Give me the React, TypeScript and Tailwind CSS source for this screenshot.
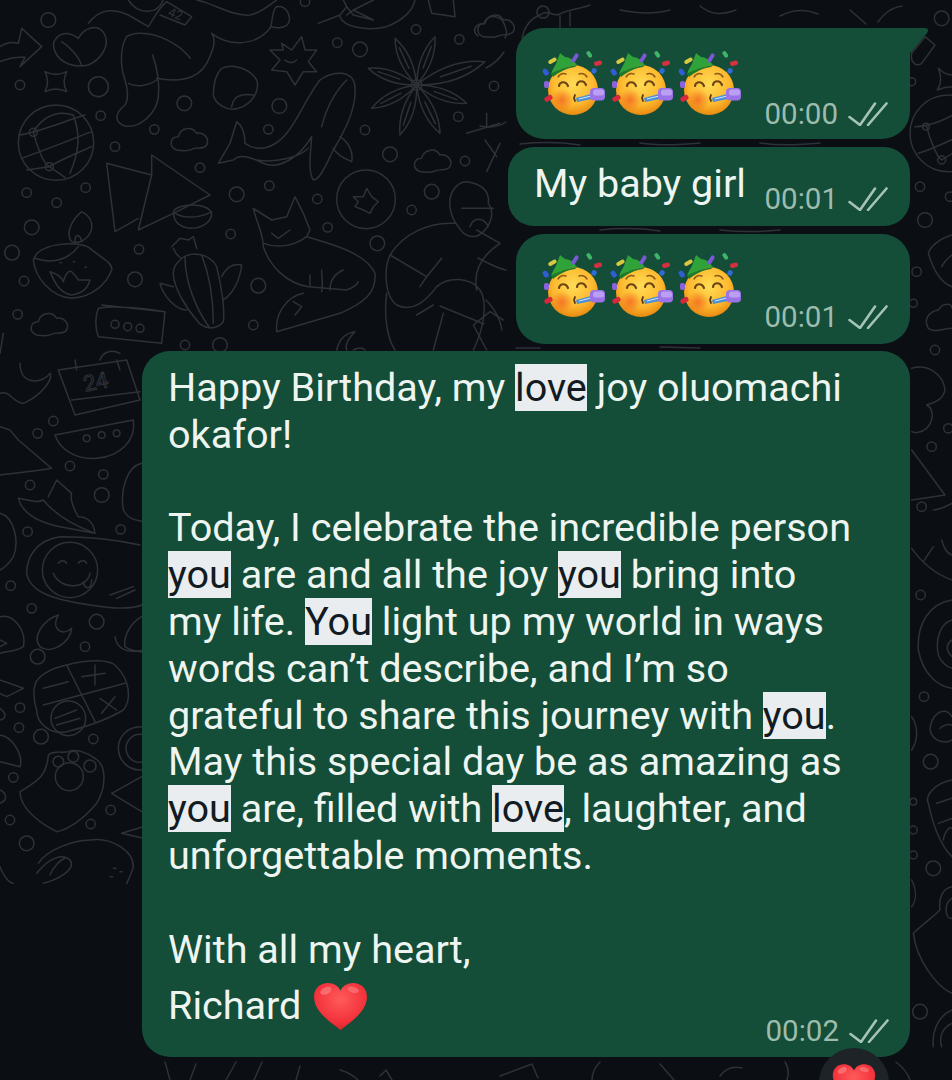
import React from "react";

const Dots = ({ c }: { c: number[][] }) => (
  <>
    {c.map(([x, y, r], i) => (
      <circle key={i} cx={x} cy={y} r={r} />
    ))}
  </>
);

const flowerTips = [
  [1185, 115], [1305, 110], [1455, 185], [1400, 310], [1320, 400], [1200, 405], [1115, 325], [1105, 205],
];

function leaf(cx: number, cy: number, tx: number, ty: number) {
  const dx = tx - cx;
  const dy = ty - cy;
  const mx = cx + dx * 0.55;
  const my = cy + dy * 0.55;
  const nx = -dy * 0.2;
  const ny = dx * 0.2;
  const vx = cx + dx * 0.35;
  const vy = cy + dy * 0.35;
  const wx = cx + dx * 0.8;
  const wy = cy + dy * 0.8;
  return `M${cx} ${cy}Q${mx + nx} ${my + ny} ${tx} ${ty}Q${mx - nx} ${my - ny} ${cx} ${cy}M${vx} ${vy}L${wx} ${wy}`;
}

const zoomTop = [
  [145, 60, 22], [60, 255, 14], [295, 260, 30], [302, 347, 14], [345, 440, 14], [463, 388, 14], [553, 310, 22], [838, 318, 22],
  [805, 388, 14], [1012, 128, 14], [1080, 148, 22], [1248, 88, 14], [1378, 118, 14], [1482, 258, 14], [1375, 350, 14], [1095, 390, 14],
  [1170, 463, 22], [1395, 483, 14], [1295, 575, 22], [1235, 630, 14], [600, 503, 14], [808, 557, 14], [710, 583, 22], [952, 597, 14],
  [983, 682, 14], [1132, 730, 22], [692, 702, 14], [775, 857, 22], [760, 975, 14], [80, 578, 14], [170, 608, 14], [257, 563, 14],
  [95, 682, 22], [36, 758, 22], [72, 843, 14], [53, 943, 14], [417, 748, 14], [405, 838, 22], [555, 1035, 14], [660, 1035, 22],
  [915, 5, 14], [345, 973, 12], [383, 980, 12], [420, 985, 12],
];

const zoomLeft = [
  [160, 183, 14], [113, 220, 14], [210, 318, 14], [310, 343, 14], [305, 405, 22], [90, 375, 14], [83, 515, 14], [362, 508, 14],
  [32, 677, 14], [95, 745, 14], [290, 785, 22], [255, 860, 14], [113, 890, 22], [60, 1043, 14], [57, 1103, 14], [123, 1130, 22],
  [280, 1137, 14], [40, 1252, 14], [332, 1350, 14], [30, 1380, 14], [272, 1392, 14], [80, 1450, 22], [260, 235, 10], [305, 225, 10], [350, 220, 10],
];

function Doodles() {
  return (
    <svg
      viewBox="0 0 952 1080"
      className="absolute inset-0 w-[952px] h-[1080px]"
      fill="none"
      stroke="#2e3237"
      strokeWidth="1.5"
      strokeLinecap="round"
      strokeLinejoin="round"
    >
      {/* upper-left field, coordinates at 3x */}
      <g transform="scale(0.33333)" strokeWidth="4.5">
        <Dots c={zoomTop} />
        <path d="M0 185C25 175 45 170 75 172L60 200L125 140L65 85L55 130C35 125 15 130 0 140" />
        <path d="M165 120C185 90 215 100 235 115C250 85 295 65 315 105C330 140 300 180 265 195C225 205 180 190 165 155C158 140 160 125 165 120ZM185 125C215 145 235 170 245 195" />
        <path d="M265 70C300 25 340 25 385 45L445 80M385 0C410 40 470 50 490 0M445 80C470 40 480 20 500 5L575 50L555 75L480 45" />
        <path d="M380 110C410 90 470 100 520 130C545 145 565 165 570 175M380 110C360 140 360 200 375 240C385 270 385 300 375 315C345 340 340 365 375 378C420 385 470 340 475 290C480 240 470 200 458 165M385 250C410 262 445 258 470 240" />
        <path d="M470 235C520 245 590 245 620 190C640 150 650 120 635 100C680 135 760 145 810 85C820 60 815 30 830 20C860 15 875 50 865 70C855 85 830 85 815 80M590 0C640 10 700 50 750 45C780 40 810 15 830 0" />
        <path d="M665 205C700 190 750 205 770 240C780 270 760 310 715 325C680 335 645 310 640 285C640 250 650 220 665 205ZM695 320C700 290 720 280 760 285" />
        <path d="M845 130L875 150L905 110L915 150L950 150L925 185L950 215L910 215L885 255L860 215L815 210L840 180L810 150L850 150ZM855 180C865 190 880 190 890 180" />
        <path d="M135 215C155 225 180 225 200 215C190 235 190 255 200 275C180 265 155 265 135 275C145 255 145 235 135 215Z" />
        <circle cx="168" cy="428" r="113" />
        <path d="M65 475C120 455 200 425 275 395M58 405C120 395 190 365 255 345M100 395C130 350 170 330 220 345M100 395C110 440 130 490 148 500M220 345C240 400 240 450 210 520M148 500C180 480 230 460 275 440M80 510L148 500L195 532" />
        <circle cx="100" cy="397" r="12" />
        <circle cx="148" cy="500" r="12" />
        <path d="M530 450C505 440 510 410 535 410C540 385 575 375 590 400C610 395 630 415 620 435C610 450 590 440 575 448C560 455 545 452 530 450Z" />
        <path transform="translate(730 65)" d="M530 450C505 440 510 410 535 410C540 385 575 375 590 400C610 395 630 415 620 435C610 450 590 440 575 448C560 455 545 452 530 450Z" />
        <path transform="translate(-420 555)" d="M530 450C505 440 510 410 535 410C540 385 575 375 590 400C610 395 630 415 620 435C610 450 590 440 575 448C560 455 545 452 530 450Z" />
        <path transform="translate(920 -340)" d="M530 450C505 440 510 410 535 410C540 385 575 375 590 400C610 395 630 415 620 435C610 450 590 440 575 448C560 455 545 452 530 450Z" />
        <path d="M320 490L455 525L455 465L630 585L520 640L415 690L455 525M320 490L345 695L415 655" />
        <path d="M520 635C530 610 625 605 635 640C635 670 600 685 570 685C535 680 520 660 520 635ZM525 640C560 660 610 650 635 635" />
        <path d="M105 770C120 730 240 720 270 745C300 770 340 790 335 810C320 850 280 890 215 895C150 890 105 830 100 780ZM105 775C150 790 200 785 235 740M180 788h4M220 785h4M255 802h4" />
        <path d="M245 635C215 660 195 700 215 725C240 735 280 710 275 670C270 650 255 640 245 635ZM225 725C225 700 240 700 245 725" />
        <path d="M150 815C175 825 185 830 190 845C195 825 205 810 215 815C225 825 230 830 235 840L270 840C265 860 250 880 215 885C180 880 165 850 150 815Z" />
        <path d="M540 780C570 750 630 760 650 800C665 860 675 930 670 965C650 990 610 990 590 960C555 920 520 860 520 820C520 800 530 790 540 780ZM555 770C555 850 590 930 630 985M605 765C630 830 640 900 640 970M515 740L540 715L565 720L580 710L590 745M520 745C530 770 540 770 545 775M520 860L480 850C490 890 530 930 560 930M665 830C680 800 700 790 725 795C720 840 700 880 670 900" />
        <path d="M760 625L815 660L860 650L885 590L910 640L930 690L920 710C990 730 1100 760 1125 820C1130 880 1090 910 1020 940L830 995C825 940 860 890 910 880M760 625C770 670 790 700 790 740C810 800 860 850 925 860L1040 870C1055 865 1070 855 1075 845M930 825V860M965 810C965 830 970 860 965 875M1030 810C995 825 990 850 990 870M790 730C830 745 880 740 920 710M815 700L835 715L870 690M880 905L905 920L885 945" />
        <path d="M655 490L690 430L710 365C730 380 735 410 735 430C770 455 820 450 860 400C900 350 920 290 960 240C1000 210 1060 210 1065 260C1070 330 1030 400 1000 450C980 490 960 540 940 540C925 520 930 470 935 410C900 470 840 510 790 490C750 470 720 460 700 480L655 490ZM1020 410C1050 430 1060 460 1055 485C1020 470 1005 455 1000 445M1040 240C1010 270 980 320 965 380M770 480C830 490 900 470 925 445" />
        {flowerTips.map(([x, y], i) => (
          <path key={i} d={leaf(1250, 255, x, y)} />
        ))}
        <circle cx="1250" cy="255" r="16" />
        <circle cx="1098" cy="598" r="88" />
        <path d="M1060 590L1090 590L1100 565L1115 590L1135 605L1120 620L1110 640L1090 630L1065 620L1075 605Z" />
        <path d="M1400 545C1440 550 1470 570 1465 610C1480 630 1480 660 1455 690C1430 720 1395 715 1375 680C1350 650 1340 600 1360 570C1370 555 1385 545 1400 545ZM1385 625L1480 625M1410 680C1420 650 1450 650 1465 680" />
        <path d="M1365 670C1290 665 1210 700 1170 765C1150 810 1155 890 1190 915C1240 940 1280 900 1310 860C1345 830 1410 830 1440 870C1465 910 1450 990 1420 1050M1170 765L1280 830L1325 775M1280 830L1260 860M1160 880C1150 960 1165 1020 1185 1050M1330 940L1300 1050M1250 945L1300 915M1430 690L1500 730M1500 730C1440 770 1420 820 1430 870M1420 975L1470 935L1510 960M1420 975L1460 1050" />
        <path d="M295 925C340 915 440 925 495 935L485 1030L295 1010C285 985 285 950 295 925ZM305 915L495 935" />
        <path d="M955 70L1020 45L1040 20L1060 45L1120 60L1060 30L1040 45M1020 50C1030 80 1100 95 1160 80C1210 60 1240 30 1245 0M1060 30L1120 0M1030 0L1040 20M1285 0L1295 40L1365 50L1360 0" />
        <path d="M1400 400L1500 370M1460 340V380M1455 420L1490 470M1500 430L1460 515" />
        <path d="M1010 1050C1020 1010 1040 1000 1065 995C1040 1020 1035 1035 1040 1050M1060 1050C1080 1040 1090 1045 1095 1050M0 1060L10 1000M300 1080C310 1050 340 1050 360 1060" />
        <text x="525" y="55" transform="rotate(22 525 45)" textAnchor="middle" fontSize="38" fontFamily="Roboto" stroke="none" fill="#2f3338">42</text>
      </g>

      {/* left column from y=360 */}
      <g transform="translate(0 360) scale(0.33333)" strokeWidth="4.5">
        <Dots c={zoomLeft} />
        <path d="M175 30L380 0L420 120L225 165ZM215 120L420 95M225 0L230 30M350 0L360 30" />
        <text x="288" y="88" transform="rotate(-12 288 70)" textAnchor="middle" fontSize="66" fontFamily="Roboto" strokeWidth="3">24</text>
        <path d="M165 225C240 210 320 195 400 180C410 240 360 290 290 295C230 300 180 270 165 225Z" />
        <path d="M0 100C30 90 40 130 70 130C120 110 160 60 150 40C130 70 60 80 60 10M0 200L30 210L55 240L155 325C100 335 40 340 0 345" />
        <path d="M55 415C90 420 110 430 130 420C170 470 230 500 285 520C280 480 255 470 235 470C205 420 215 400 215 400L170 360L145 410M55 415C70 470 130 490 180 500L285 520" />
        <path d="M420 555C330 535 250 530 180 530C110 540 80 590 80 640C90 700 170 720 270 735C330 745 390 750 425 735" />
        <circle cx="210" cy="630" r="83" />
        <path d="M160 640C180 690 260 690 270 640M175 610C180 600 195 600 200 610M235 610C240 600 255 600 260 610M250 665C252 690 275 690 275 660M330 705L400 680M350 715L405 690" />
        <path d="M0 460C40 470 60 540 40 590C25 615 10 625 0 630" />
        <path d="M175 765C130 780 95 830 120 860C150 885 210 850 215 805C190 830 150 810 175 765Z" />
        <path d="M0 770C40 760 80 810 70 860C40 880 20 870 0 880M0 840L20 850L0 860" />
        <path d="M105 975C110 950 150 925 200 915C260 900 330 895 350 920C390 960 395 1020 370 1050C320 1080 260 1100 200 1115C150 1125 110 1090 110 1050C100 1020 100 990 105 975ZM130 1035L375 970M200 915L285 1085M130 985L205 965M245 950L315 940M285 915L285 975M300 1015L350 1050M345 1010L305 1060" />
        <circle cx="205" cy="1075" r="52" />
        <path d="M165 1075L230 1050M170 1095L240 1075" />
        <path d="M145 1185C160 1170 190 1180 205 1175C230 1165 265 1180 285 1195C320 1215 320 1280 290 1330C250 1380 200 1410 170 1415C130 1395 60 1350 60 1295C110 1265 140 1250 145 1185Z" />
        <circle cx="175" cy="1205" r="16" />
        <circle cx="220" cy="1190" r="16" />
        <circle cx="270" cy="1218" r="18" />
        <circle cx="208" cy="1250" r="42" />
        <path d="M425 1250L335 1300L425 1355M430 1400L365 1420L430 1435" />
        <circle cx="420" cy="1165" r="65" />
        <circle cx="420" cy="1165" r="42" />
        <path d="M115 1510C140 1470 220 1440 270 1440C330 1430 400 1470 400 1520C395 1540 385 1560 380 1570M110 1540C150 1490 190 1480 210 1500C230 1530 170 1560 130 1570M150 1545C160 1520 180 1500 195 1495M340 1525h8M330 1550h8M360 1535h6" />
        <path d="M0 1125C40 1130 70 1190 60 1220L0 1205M0 960L70 985L20 1010L0 1000M0 1045C20 1060 20 1075 0 1080M0 1290C20 1300 25 1320 0 1330M0 1520C10 1550 30 1570 40 1570" />
        <path d="M425 310C380 320 360 390 370 450C385 480 410 480 430 485M425 770C390 790 370 830 375 860C400 880 430 870 430 880M345 830C350 870 385 880 430 870" />
      </g>

      {/* right strip, upper */}
      <g transform="translate(900 0) scale(0.33333)" strokeWidth="4.5">
        <Dots c={[[125, 55, 22], [60, 560, 14], [75, 660, 22], [50, 815, 14], [105, 1050, 14], [145, 1285, 14], [95, 1340, 14], [35, 245, 12], [150, 590, 14], [40, 910, 12], [65, 1520, 14]]} />
        <circle cx="145" cy="400" r="115" />
        <path d="M45 380C90 380 130 360 170 340M55 460C90 450 130 430 165 415M80 380C90 420 110 470 125 480M125 480C140 470 156 460 170 455" />
        <circle cx="78" cy="380" r="10" />
        <circle cx="125" cy="480" r="12" />
        <path d="M115 205C130 220 145 225 156 225M115 205C125 230 125 250 112 270C130 262 145 260 156 260" />
        <path d="M35 160L75 110L105 135L65 190C50 200 30 190 35 160Z" />
        <path d="M156 705C120 715 90 740 85 760C100 810 125 850 156 860M125 800C135 780 150 770 156 765" />
        <path d="M85 985C70 960 85 935 115 930C130 905 156 910 156 925M85 985C105 1000 130 985 156 985" />
        <path d="M35 1105C80 1090 130 1120 135 1170C130 1200 100 1210 80 1215C110 1230 100 1290 50 1298L35 1295" />
        <path d="M35 1350L135 1485L35 1500M100 1530C120 1530 135 1520 156 1510" />
      </g>

      {/* right strip, lower */}
      <g transform="translate(900 540) scale(0.33333)" strokeWidth="4.5">
        <Dots c={[[62, 165, 14], [72, 470, 14], [92, 665, 22], [40, 870, 12], [40, 945, 12], [100, 985, 22], [60, 1415, 22], [40, 785, 10]]} />
        <path d="M35 25C60 60 100 100 156 120M70 65L100 20M125 0C130 20 140 40 156 45" />
        <path d="M156 180C90 190 50 250 55 330C70 410 120 440 156 445M156 240C120 250 105 300 115 345C125 370 140 380 156 385M156 300C140 310 135 330 156 350" />
        <path d="M156 530C130 490 90 530 90 570C100 610 140 610 156 600M156 555C140 550 125 560 120 565" />
        <path d="M156 720C100 730 75 770 85 790C100 860 125 920 156 950M110 790L156 775M115 850L156 835M130 900C135 870 150 860 156 865" />
        <path d="M156 1040C130 1045 115 1070 120 1110C100 1130 60 1160 40 1180C50 1260 110 1340 156 1360M156 1075C130 1090 135 1140 156 1135" />
        <path d="M156 1410C110 1430 95 1480 100 1520M156 1450C130 1460 115 1490 125 1520M35 530C55 560 55 600 35 630M35 1020C50 1050 50 1080 35 1100" />
      </g>

      {/* top edge and gaps around the bubbles, at 1x */}
      <path d="M478 36C470 30 478 22 484 24C486 16 495 14 502 20C506 26 508 34 505 38M522 38C525 25 532 18 540 15C550 8 552 18 560 14C566 10 576 10 590 5M543 6a6 6 0 1 0 .1 0M560 16v12M570 12v14" />
      <path d="M520 144C540 142 560 142 580 145M640 143C660 146 680 145 700 143M760 143C780 146 800 145 820 143M600 230C620 228 640 228 660 231M720 230C740 232 760 232 780 230M516 348h24M660 347l40 1M620 10c20 4 36 4 50 0M700 6c10 8 20 10 36 4M780 16c12-6 24-8 38-2M850 10l16 14M878 22c6-8 12-14 24-16" />
      <path d="M486 68c8-4 14-10 18-16M480 126c10 2 20 0 26-4M440 306l44 18M486 300c8 8 14 18 16 30M478 258c8 4 18 10 28 12" />
      <path d="M165 1062l5 18M196 1064l-6 16M236 1062l-10 18M262 1062l-8 18M300 1066l-4 14M340 1070c8 2 14 6 18 10M380 1076l6-6 6 10M500 1076l32-12 6 14M600 1062c-6 6-8 12-8 18M660 1064l14 16M720 1076c6-8 14-10 22-8M785 1062c4 6 4 12 2 18M896 1062c8 6 12 12 14 18" />
    </svg>
  );
}

function Ticks() {
  return (
    <svg viewBox="0 0 40 24" className="w-[40px] h-[24px] ml-[10px] shrink-0" fill="none" stroke="#a5c4b6" strokeWidth="2.6" strokeLinecap="round" strokeLinejoin="round">
      <path d="M1.5 15L12 23L27 1.5" />
      <path d="M20 23L38.5 1.5" />
    </svg>
  );
}

function Meta({ time }: { time: string }) {
  return (
    <div className="flex items-center shrink-0">
      <span className="text-[29.5px] leading-[34px] text-[#9dbcae]">{time}</span>
      <Ticks />
    </div>
  );
}

function PartyFace({ id }: { id: string }) {
  return (
    <svg viewBox="0 0 66 66" className="w-[66px] h-[66px] shrink-0">
      <defs>
        <radialGradient id={`f${id}`} cx="50%" cy="38%" r="62%">
          <stop offset="0%" stopColor="#ffdc55" />
          <stop offset="65%" stopColor="#fdb92f" />
          <stop offset="100%" stopColor="#e98a10" />
        </radialGradient>
        <radialGradient id={`c${id}`} cx="50%" cy="50%" r="50%">
          <stop offset="0%" stopColor="#f26a22" stopOpacity="0.85" />
          <stop offset="100%" stopColor="#f26a22" stopOpacity="0" />
        </radialGradient>
      </defs>
      <circle cx="32" cy="39" r="25" fill={`url(#f${id})`} />
      <circle cx="21" cy="49" r="11" fill={`url(#c${id})`} />
      <path d="M10 23C12 17 15 14 16 10L19 2L24 6C28 6 33 9 35 13L36 14C27 15 17 19 10 23z" fill="#2fa23a" />
      <path d="M10 23C18 18 27 15 36 14L34 16C26 17 18 21 12 26z" fill="#1c7a2c" />
      <rect x="7" y="8" width="9" height="4" rx="2" transform="rotate(-28 11 10)" fill="#d8c93f" />
      <rect x="32" y="2" width="4" height="10" rx="2" transform="rotate(32 34 7)" fill="#7a58d6" />
      <rect x="46" y="0" width="4" height="7" rx="2" transform="rotate(-35 48 3)" fill="#3fb56a" />
      <rect x="53" y="10" width="8" height="4.5" rx="2" transform="rotate(-15 57 12)" fill="#d5303f" />
      <rect x="2" y="18" width="5" height="7" rx="2" transform="rotate(-35 4 21)" fill="#2f5ed0" />
      <rect x="51" y="17" width="5" height="5.5" rx="2" transform="rotate(30 53 19)" fill="#2f6ad6" />
      <rect x="3" y="30" width="5" height="7" rx="2" fill="#8b62dc" />
      <rect x="3" y="45" width="8.5" height="5" rx="2" transform="rotate(-28 7 47)" fill="#d9273d" />
      <path d="M17 26c2-3 5-4 8-3M38 23c3-1 6 0 8 3" stroke="#8c5a17" strokeWidth="1.4" fill="none" strokeLinecap="round" />
      <path d="M18 35c1-5 7-5 9 0M36 34c1-5 7-5 9 0" stroke="#6d4514" strokeWidth="2.2" fill="none" strokeLinecap="round" />
      <path d="M34 44l-1 3 1 3" stroke="#5b3a10" strokeWidth="1.8" fill="none" strokeLinecap="round" />
      <path d="M35 47l15-4 1 5-15 3z" fill="#4a8fd8" />
      <path d="M38 48l12-3" stroke="#d6e6f5" strokeWidth="1" />
      <rect x="49" y="37" width="15" height="12.5" rx="4" fill="#9a74e6" />
      <rect x="52" y="38.5" width="11" height="6" rx="2.5" fill="#bb9ff2" />
    </svg>
  );
}

function Faces({ id }: { id: string }) {
  return (
    <div className="flex gap-[2px]">
      <PartyFace id={`${id}a`} />
      <PartyFace id={`${id}b`} />
      <PartyFace id={`${id}c`} />
    </div>
  );
}

function Heart({ className, id }: { className: string; id: string }) {
  return (
    <svg viewBox="0 0 56 50" className={className}>
      <defs>
        <radialGradient id={id} cx="50%" cy="35%" r="70%">
          <stop offset="0%" stopColor="#ff5b5b" />
          <stop offset="70%" stopColor="#f2313a" />
          <stop offset="100%" stopColor="#d81f2a" />
        </radialGradient>
      </defs>
      <path d="M28 49C15 39 1 29 1 15 1 6 8 1 15 1c6 0 11 3 13 8 2-5 7-8 13-8 7 0 14 5 14 14 0 14-14 24-27 34z" fill={`url(#${id})`} />
      <ellipse cx="13" cy="9" rx="6" ry="3.5" fill="#ff9a9a" opacity="0.5" transform="rotate(-25 13 9)" />
      <ellipse cx="41" cy="8" rx="6" ry="3" fill="#ff9a9a" opacity="0.45" transform="rotate(15 41 8)" />
    </svg>
  );
}

const Hl = ({ children }: { children: React.ReactNode }) => (
  <span className="bg-[#e9edef] text-[#111b21]">{children}</span>
);

const Line = ({ children }: { children?: React.ReactNode }) => (
  <div className="h-[46.8px] whitespace-nowrap">{children}</div>
);

export default function App() {
  return (
    <div className="relative w-[952px] h-[1080px] overflow-hidden bg-[#0b0f14] font-['Roboto',sans-serif]">
      <Doodles />
      <div className="relative flex flex-col items-end gap-[8px] pt-[28px] pr-[42px]">
        <div className="relative w-[394px] h-[111px] bg-[#144d38] rounded-[28px] rounded-tr-none flex items-end justify-between pl-[26px] pr-[22px] pb-[8px]">
          <svg viewBox="0 0 20 28" className="absolute left-full top-0 w-[20px] h-[28px] -ml-px">
            <path d="M0 0H16c3 0 4 3 2 5L0 27z" fill="#144d38" />
          </svg>
          <div className="self-start pt-[23px] -ml-[1px]">
            <Faces id="a" />
          </div>
          <Meta time="00:00" />
        </div>

        <div className="w-[402px] h-[79px] bg-[#144d38] rounded-[26px] flex items-center justify-between pl-[26px] pr-[22px]">
          <span className="text-[39.5px] leading-[44px] text-[#eef5f1] whitespace-nowrap -mt-[6px]">My baby girl</span>
          <div className="mt-[25px]">
            <Meta time="00:01" />
          </div>
        </div>

        <div className="w-[394px] h-[110px] bg-[#144d38] rounded-[28px] flex items-end justify-between pl-[26px] pr-[22px] pb-[10px]">
          <div className="self-start pt-[19px] -ml-[1px]">
            <Faces id="b" />
          </div>
          <Meta time="00:01" />
        </div>

        <div className="relative w-[768px] h-[706px] -mt-[1px] bg-[#144d38] rounded-[28px] pl-[26px] pt-[14px] text-[39.6px] leading-[46.8px] text-[#eef5f1]">
          <Line>Happy Birthday, my <Hl>love</Hl> joy oluomachi</Line>
          <Line>okafor!</Line>
          <Line />
          <Line>Today, I celebrate the incredible person</Line>
          <Line><Hl>you</Hl> are and all the joy <Hl>you</Hl> bring into</Line>
          <Line>my life. <Hl>You</Hl> light up my world in ways</Line>
          <Line>words can’t describe, and I’m so</Line>
          <Line>grateful to share this journey with <Hl>you</Hl>.</Line>
          <Line>May this special day be as amazing as</Line>
          <Line><Hl>you</Hl> are, filled with <Hl>love</Hl>, laughter, and</Line>
          <Line>unforgettable moments.</Line>
          <Line />
          <Line>With all my heart,</Line>
          <div className="flex items-center gap-[12px] mt-[8px] h-[50px]">
            <span>Richard</span>
            <Heart id="hr" className="w-[55px] h-[49px]" />
          </div>
          <div className="absolute right-[21px] bottom-[9px]">
            <Meta time="00:02" />
          </div>
          <div className="absolute right-[21px] -bottom-[61px] w-[70px] h-[70px] rounded-full bg-[#1d2327] flex justify-center pt-[15px]">
            <Heart id="hs" className="w-[44px] h-[40px]" />
          </div>
        </div>
      </div>
    </div>
  );
}
